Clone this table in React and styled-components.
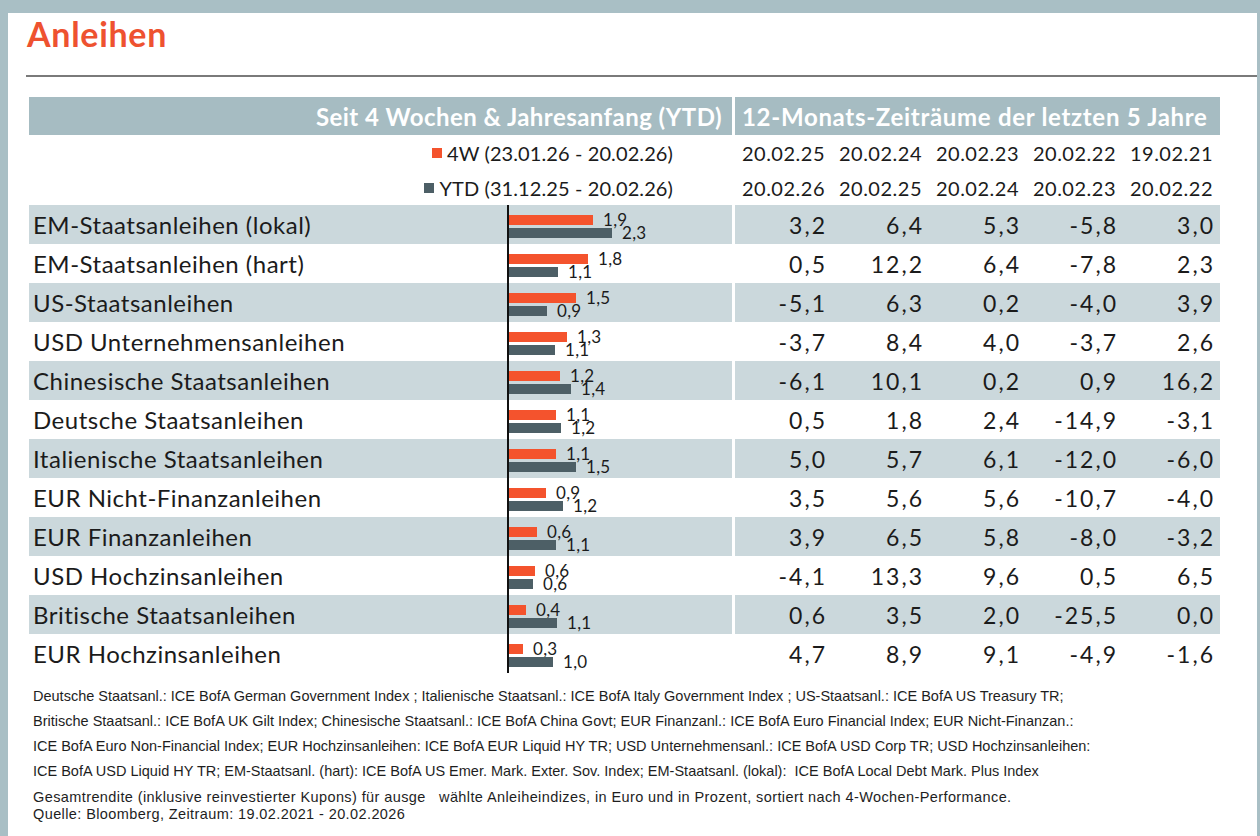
import styled, { createGlobalStyle } from 'styled-components';

const GlobalStyle = createGlobalStyle`
  html, body {
    margin: 0;
    padding: 0;
    background: #a9bfc5;
  }
  * {
    box-sizing: border-box;
  }
`;

const ORANGE = '#f4532d';
const SLATE = '#4d5f66';
const SHADE = '#cbd8dc';
const HEAD = '#a6bcc2';

// p4 / py = bar widths in px, measured (~45px per percent point)
const rows = [
  { name: 'EM-Staatsanleihen (lokal)', w4: 1.9, ytd: 2.3, p4: 84, py: 103, vals: ['3,2', '6,4', '5,3', '-5,8', '3,0'] },
  { name: 'EM-Staatsanleihen (hart)', w4: 1.8, ytd: 1.1, p4: 79, py: 49, vals: ['0,5', '12,2', '6,4', '-7,8', '2,3'] },
  { name: 'US-Staatsanleihen', w4: 1.5, ytd: 0.9, p4: 67, py: 38, vals: ['-5,1', '6,3', '0,2', '-4,0', '3,9'] },
  { name: 'USD Unternehmensanleihen', w4: 1.3, ytd: 1.1, p4: 58, py: 46, vals: ['-3,7', '8,4', '4,0', '-3,7', '2,6'] },
  { name: 'Chinesische Staatsanleihen', w4: 1.2, ytd: 1.4, p4: 51, py: 62, vals: ['-6,1', '10,1', '0,2', '0,9', '16,2'] },
  { name: 'Deutsche Staatsanleihen', w4: 1.1, ytd: 1.2, p4: 47, py: 52, vals: ['0,5', '1,8', '2,4', '-14,9', '-3,1'] },
  { name: 'Italienische Staatsanleihen', w4: 1.1, ytd: 1.5, p4: 47, py: 67, vals: ['5,0', '5,7', '6,1', '-12,0', '-6,0'] },
  { name: 'EUR Nicht-Finanzanleihen', w4: 0.9, ytd: 1.2, p4: 37, py: 54, vals: ['3,5', '5,6', '5,6', '-10,7', '-4,0'] },
  { name: 'EUR Finanzanleihen', w4: 0.6, ytd: 1.1, p4: 28, py: 47, vals: ['3,9', '6,5', '5,8', '-8,0', '-3,2'] },
  { name: 'USD Hochzinsanleihen', w4: 0.6, ytd: 0.6, p4: 26, py: 24, vals: ['-4,1', '13,3', '9,6', '0,5', '6,5'] },
  { name: 'Britische Staatsanleihen', w4: 0.4, ytd: 1.1, p4: 17, py: 48, vals: ['0,6', '3,5', '2,0', '-25,5', '0,0'] },
  { name: 'EUR Hochzinsanleihen', w4: 0.3, ytd: 1.0, p4: 14, py: 44, vals: ['4,7', '8,9', '9,1', '-4,9', '-1,6'] },
];

const fmt = (n) => n.toFixed(1).replace('.', ',');

const Frame = styled.div`
  width: 1260px;
  height: 836px;
  padding: 3px 3px 3px 8px;
  background: #a9bfc5;
`;

const Sheet = styled.div`
  height: 100%;
  background: #fff;
  padding-left: 18px;
  font-family: Lato, 'Open Sans', sans-serif;
  color: #1b1b1b;
`;

const Title = styled.h1`
  margin: 10px 0 0 1px;
  height: 41px;
  font-size: 34px;
  line-height: 41px;
  font-weight: 700;
  letter-spacing: 0.7px;
  color: #ee5230;
`;

const Rule = styled.div`
  margin-top: 21px;
  height: 2px;
  background: #7a7a7a;
`;

const Table = styled.div`
  margin: 20px 0 0 3px;
  width: 1191px;
`;

const Row = styled.div`
  display: grid;
  grid-template-columns: 703px 485px;
  column-gap: 3px;
  height: ${(p) => p.$h}px;
`;

const HeadCell = styled.div`
  background: ${HEAD};
  color: #fff;
  font-weight: 700;
  font-size: 24px;
  letter-spacing: ${(p) => (p.$right ? 0.45 : 0.7)}px;
  white-space: nowrap;
  display: flex;
  align-items: center;
  justify-content: ${(p) => (p.$right ? 'flex-end' : 'flex-start')};
  padding: ${(p) => (p.$right ? '0 10px 0 0' : '0 0 0 7px')};
`;

const LegendCell = styled.div`
  display: flex;
  align-items: center;
  justify-content: flex-end;
  padding-right: 59px;
  font-size: 20px;
  letter-spacing: 0.1px;
`;

const Swatch = styled.span`
  width: 10px;
  height: 10px;
  margin-right: 5px;
  background: ${(p) => p.$color};
`;

const Cols = styled.div`
  display: grid;
  grid-template-columns: repeat(5, 97px);
  align-items: center;
  background: ${(p) => (p.$shade ? SHADE : 'transparent')};
`;

const Num = styled.div`
  text-align: right;
  padding-right: 7px;
  font-size: ${(p) => (p.$small ? 20 : 23)}px;
  letter-spacing: ${(p) => (p.$small ? 0.5 : 2)}px;
  margin-right: ${(p) => (p.$small ? 0 : -2)}px;
  white-space: nowrap;
`;

const LeftCell = styled.div`
  display: flex;
  background: ${(p) => (p.$shade ? SHADE : 'transparent')};
`;

const Label = styled.div`
  width: 478px;
  padding-left: 4px;
  display: flex;
  align-items: center;
  font-size: 24px;
  letter-spacing: 0.5px;
  white-space: nowrap;
`;

const Chart = styled.div`
  flex: 1;
  border-left: 2px solid #111;
  padding-top: 10px;
  display: flex;
  flex-direction: column;
  gap: 3px;
`;

const BarLine = styled.div`
  display: flex;
  align-items: flex-start;
  height: 10px;
`;

const Bar = styled.div`
  height: 10px;
  background: ${(p) => p.$color};
`;

const BarValue = styled.span`
  margin-left: 10px;
  font-size: 17px;
  line-height: 10px;
  letter-spacing: 0.3px;
  white-space: nowrap;
`;

const Notes = styled.div`
  margin: 11px 0 0 7px;
  font-family: 'Liberation Sans', Arial, sans-serif;
  font-size: 14.5px;
  line-height: 25px;
  color: #1e1e1e;
  white-space: pre;
`;

const Source = styled.div`
  margin: 5px 0 0 7px;
  font-family: 'Liberation Sans', Arial, sans-serif;
  font-size: 14.5px;
  line-height: 17px;
  letter-spacing: 0.4px;
  color: #1e1e1e;
  white-space: pre;
`;

function DataRow({ row, shade }) {
  return (
    <Row $h={39}>
      <LeftCell $shade={shade}>
        <Label>{row.name}</Label>
        <Chart>
          <BarLine>
            <Bar $color={ORANGE} style={{ width: row.p4 }} />
            <BarValue>{fmt(row.w4)}</BarValue>
          </BarLine>
          <BarLine>
            <Bar $color={SLATE} style={{ width: row.py }} />
            <BarValue>{fmt(row.ytd)}</BarValue>
          </BarLine>
        </Chart>
      </LeftCell>
      <Cols $shade={shade}>
        {row.vals.map((v, i) => (
          <Num key={i}>{v}</Num>
        ))}
      </Cols>
    </Row>
  );
}

export default function App() {
  return (
    <>
      <GlobalStyle />
      <Frame>
        <Sheet>
          <Title>Anleihen</Title>
          <Rule />
          <Table>
            <Row $h={38}>
              <HeadCell $right>Seit 4 Wochen &amp; Jahresanfang (YTD)</HeadCell>
              <HeadCell>12-Monats-Zeiträume der letzten 5 Jahre</HeadCell>
            </Row>
            <Row $h={35}>
              <LegendCell>
                <Swatch $color={ORANGE} />
                4W (23.01.26 - 20.02.26)
              </LegendCell>
              <Cols>
                {['20.02.25', '20.02.24', '20.02.23', '20.02.22', '19.02.21'].map((d) => (
                  <Num key={d} $small>{d}</Num>
                ))}
              </Cols>
            </Row>
            <Row $h={35}>
              <LegendCell>
                <Swatch $color={SLATE} />
                YTD (31.12.25 - 20.02.26)
              </LegendCell>
              <Cols>
                {['20.02.26', '20.02.25', '20.02.24', '20.02.23', '20.02.22'].map((d) => (
                  <Num key={d} $small>{d}</Num>
                ))}
              </Cols>
            </Row>
            {rows.map((r, i) => (
              <DataRow key={r.name} row={r} shade={i % 2 === 0} />
            ))}
          </Table>
          <Notes>
            {'Deutsche Staatsanl.: ICE BofA German Government Index ; Italienische Staatsanl.: ICE BofA Italy Government Index ; US-Staatsanl.: ICE BofA US Treasury TR;\n'}
            {'Britische Staatsanl.: ICE BofA UK Gilt Index; Chinesische Staatsanl.: ICE BofA China Govt; EUR Finanzanl.: ICE BofA Euro Financial Index; EUR Nicht-Finanzan.:\n'}
            {'ICE BofA Euro Non-Financial Index; EUR Hochzinsanleihen: ICE BofA EUR Liquid HY TR; USD Unternehmensanl.: ICE BofA USD Corp TR; USD Hochzinsanleihen:\n'}
            {'ICE BofA USD Liquid HY TR; EM-Staatsanl. (hart): ICE BofA US Emer. Mark. Exter. Sov. Index; EM-Staatsanl. (lokal):  ICE BofA Local Debt Mark. Plus Index'}
          </Notes>
          <Source>
            {'Gesamtrendite (inklusive reinvestierter Kupons) für ausge   wählte Anleiheindizes, in Euro und in Prozent, sortiert nach 4-Wochen-Performance.\n'}
            {'Quelle: Bloomberg, Zeitraum: 19.02.2021 - 20.02.2026'}
          </Source>
        </Sheet>
      </Frame>
    </>
  );
}
